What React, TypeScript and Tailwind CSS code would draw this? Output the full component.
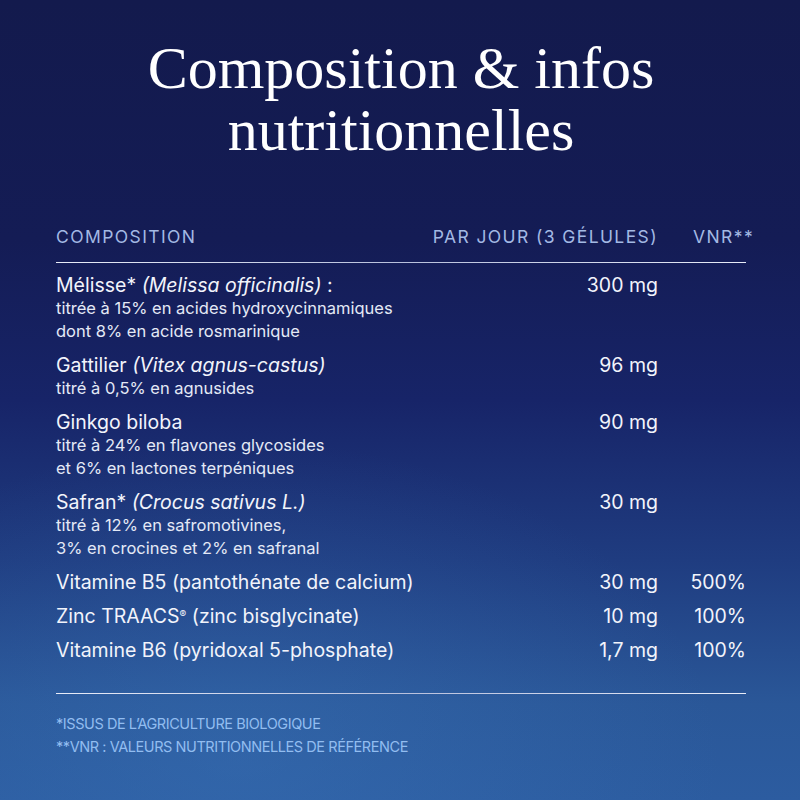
import React from "react";

type Row = {
  name: React.ReactNode;
  sub?: string[];
  amount: string;
  vnr?: string;
};

const rows: Row[] = [
  {
    name: (
      <>
        Mélisse* <i>(Melissa officinalis)</i> :
      </>
    ),
    sub: ["titrée à 15% en acides hydroxycinnamiques", "dont 8% en acide rosmarinique"],
    amount: "300 mg",
  },
  {
    name: (
      <>
        Gattilier <i>(Vitex agnus-castus)</i>
      </>
    ),
    sub: ["titré à 0,5% en agnusides"],
    amount: "96 mg",
  },
  {
    name: "Ginkgo biloba",
    sub: ["titré à 24% en flavones glycosides", "et 6% en lactones terpéniques"],
    amount: "90 mg",
  },
  {
    name: (
      <>
        Safran* <i>(Crocus sativus L.)</i>
      </>
    ),
    sub: ["titré à 12% en safromotivines,", "3% en crocines et 2% en safranal"],
    amount: "30 mg",
  },
  { name: "Vitamine B5 (pantothénate de calcium)", amount: "30 mg", vnr: "500%" },
  {
    name: (
      <>
        Zinc TRAACS<sup className="text-[10px]">®</sup> (zinc bisglycinate)
      </>
    ),
    amount: "10 mg",
    vnr: "100%",
  },
  { name: "Vitamine B6 (pyridoxal 5-phosphate)", amount: "1,7 mg", vnr: "100%" },
];

export default function App() {
  return (
    <div className="relative h-[800px] w-[800px] overflow-hidden bg-[linear-gradient(180deg,#131a4d_0%,#141c55_30%,#172468_50%,#1f3c80_70%,#2a5798_88%,#2c5ca0_100%)] font-['Inter',sans-serif] text-white">
      <div className="pointer-events-none absolute inset-0 bg-[radial-gradient(ellipse_60%_40%_at_30%_95%,rgba(60,120,190,0.35),transparent)]" />
      <div className="relative px-14 pr-[54px]">
        <h1 className="pt-[37px] text-center font-['Liberation_Serif',serif] text-[60px] leading-[62px] text-white">
          Composition &amp; infos
          <br />
          nutritionnelles
        </h1>

        <div className="mt-[63px] flex items-center text-[17.5px] tracking-[0.08em] text-[#a3b9e4]">
          <div className="flex-1">COMPOSITION</div>
          <div className="text-right">PAR JOUR (3 GÉLULES)</div>
          <div className="w-[88px] pl-[35px] whitespace-nowrap">VNR**</div>
        </div>
        <div className="mt-[12px] h-px bg-[linear-gradient(90deg,#e8ecf8,#b8c0dc_50%,#e8ecf8)]" />

        <div className="mt-[10px] flex flex-col gap-[10px]">
          {rows.map((r, i) => (
            <div key={i} className="flex items-start">
              <div className="flex-1">
                <div className="text-[19.5px] leading-[24px] text-[#f2f4fb]">{r.name}</div>
                {r.sub?.map((s) => (
                  <div key={s} className="text-[16.5px] leading-[23px] text-[#e4e9f6]">
                    {s}
                  </div>
                ))}
              </div>
              <div className="text-right text-[19.5px] leading-[24px] text-[#f2f4fb]">{r.amount}</div>
              <div className="w-[88px] text-right text-[19.5px] leading-[24px] text-[#f2f4fb]">{r.vnr}</div>
            </div>
          ))}
        </div>

        <div className="mt-[31px] h-px bg-[linear-gradient(90deg,#e8ecf8,#b8c0dc_50%,#e8ecf8)]" />

        <div className="mt-[18px] text-[14.5px] leading-[23px] tracking-[-0.03em] text-[#92bdf0]">
          <div>*ISSUS DE L’AGRICULTURE BIOLOGIQUE</div>
          <div>**VNR : VALEURS NUTRITIONNELLES DE RÉFÉRENCE</div>
        </div>
      </div>
    </div>
  );
}
